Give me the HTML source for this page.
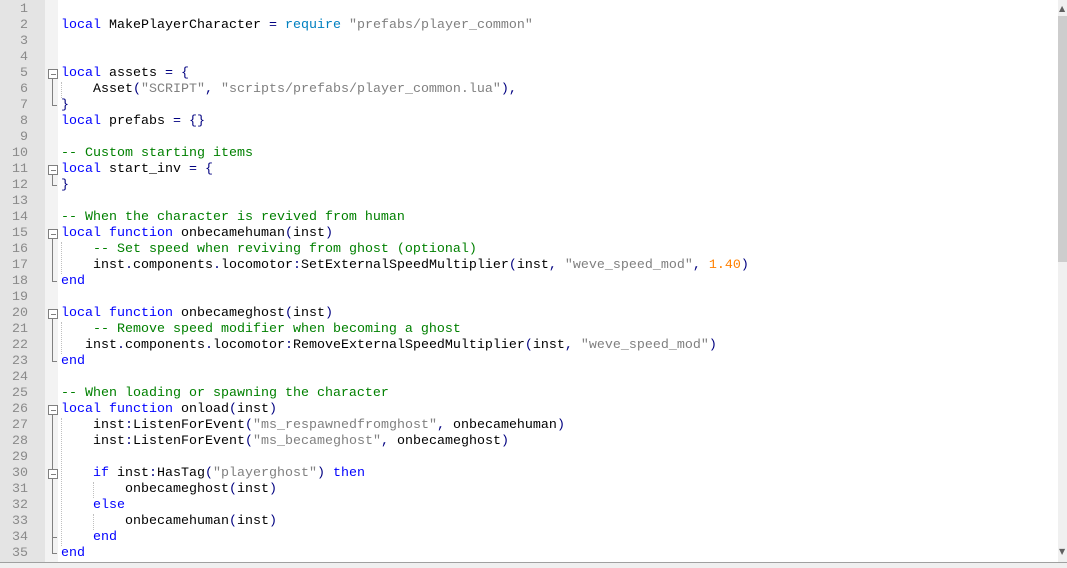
<!DOCTYPE html>
<html><head><meta charset="utf-8"><style>
html,body{margin:0;padding:0;width:1067px;height:567px;overflow:hidden;background:#fff;}
#gut{position:absolute;left:0;top:0;width:45px;height:562px;background:#e4e4e4;}
#fold{position:absolute;left:45px;top:0;width:13px;height:562px;background:#f3f3f3;}
#code{position:absolute;left:0;top:2px;width:1058px;}
.l{position:relative;height:16px;line-height:16px;font-family:"Liberation Mono",monospace;font-size:13.33px;white-space:pre;}
.n{position:absolute;left:0;width:28px;color:#8a8a8a;text-align:right;}
.t{position:absolute;left:61px;color:#000;}
.k{color:#0000ff}.s{color:#808080}.c{color:#008000}.r{color:#0080c0}.o{color:#000080}.num{color:#ff8000}
#sb{position:absolute;left:1058px;top:0;width:9px;height:562px;background:#f0f0f0;}
#th{position:absolute;left:1058px;top:16px;width:9px;height:246px;background:#cdcdcd;}
#bot{position:absolute;left:0;top:562px;width:1067px;height:5px;background:#f0f0f0;border-top:1px solid #a0a0a0;}
.box{position:absolute;left:48px;width:8px;height:8px;border:1px solid #808080;background:#fff;}
.box:after{content:"";position:absolute;left:2px;top:4px;width:5px;height:1px;background:#808080;}
.vl{position:absolute;left:52px;width:1px;background:#808080;}
.hl{position:absolute;left:52px;width:5px;height:1px;background:#808080;}
.ig{position:absolute;width:0;border-left:1px dotted #c0c0c0;}
</style></head><body>
<div id="gut"></div><div id="fold"></div>
<div id="code">
<div class="l"><span class="n">1</span></div>
<div class="l"><span class="n">2</span><span class="t"><span class="k">local</span> MakePlayerCharacter <span class="o">=</span> <span class="r">require</span> <span class="s">"prefabs/player_common"</span></span></div>
<div class="l"><span class="n">3</span></div>
<div class="l"><span class="n">4</span></div>
<div class="l"><span class="n">5</span><span class="t"><span class="k">local</span> assets <span class="o">=</span> <span class="o">{</span></span></div>
<div class="l"><span class="n">6</span><span class="t">    Asset<span class="o">(</span><span class="s">"SCRIPT"</span><span class="o">,</span> <span class="s">"scripts/prefabs/player_common.lua"</span><span class="o">),</span></span></div>
<div class="l"><span class="n">7</span><span class="t"><span class="o">}</span></span></div>
<div class="l"><span class="n">8</span><span class="t"><span class="k">local</span> prefabs <span class="o">=</span> <span class="o">{}</span></span></div>
<div class="l"><span class="n">9</span></div>
<div class="l"><span class="n">10</span><span class="t"><span class="c">-- Custom starting items</span></span></div>
<div class="l"><span class="n">11</span><span class="t"><span class="k">local</span> start_inv <span class="o">=</span> <span class="o">{</span></span></div>
<div class="l"><span class="n">12</span><span class="t"><span class="o">}</span></span></div>
<div class="l"><span class="n">13</span></div>
<div class="l"><span class="n">14</span><span class="t"><span class="c">-- When the character is revived from human</span></span></div>
<div class="l"><span class="n">15</span><span class="t"><span class="k">local</span> <span class="k">function</span> onbecamehuman<span class="o">(</span>inst<span class="o">)</span></span></div>
<div class="l"><span class="n">16</span><span class="t">    <span class="c">-- Set speed when reviving from ghost (optional)</span></span></div>
<div class="l"><span class="n">17</span><span class="t">    inst<span class="o">.</span>components<span class="o">.</span>locomotor<span class="o">:</span>SetExternalSpeedMultiplier<span class="o">(</span>inst<span class="o">,</span> <span class="s">"weve_speed_mod"</span><span class="o">,</span> <span class="num">1.40</span><span class="o">)</span></span></div>
<div class="l"><span class="n">18</span><span class="t"><span class="k">end</span></span></div>
<div class="l"><span class="n">19</span></div>
<div class="l"><span class="n">20</span><span class="t"><span class="k">local</span> <span class="k">function</span> onbecameghost<span class="o">(</span>inst<span class="o">)</span></span></div>
<div class="l"><span class="n">21</span><span class="t">    <span class="c">-- Remove speed modifier when becoming a ghost</span></span></div>
<div class="l"><span class="n">22</span><span class="t">   inst<span class="o">.</span>components<span class="o">.</span>locomotor<span class="o">:</span>RemoveExternalSpeedMultiplier<span class="o">(</span>inst<span class="o">,</span> <span class="s">"weve_speed_mod"</span><span class="o">)</span></span></div>
<div class="l"><span class="n">23</span><span class="t"><span class="k">end</span></span></div>
<div class="l"><span class="n">24</span></div>
<div class="l"><span class="n">25</span><span class="t"><span class="c">-- When loading or spawning the character</span></span></div>
<div class="l"><span class="n">26</span><span class="t"><span class="k">local</span> <span class="k">function</span> onload<span class="o">(</span>inst<span class="o">)</span></span></div>
<div class="l"><span class="n">27</span><span class="t">    inst<span class="o">:</span>ListenForEvent<span class="o">(</span><span class="s">"ms_respawnedfromghost"</span><span class="o">,</span> onbecamehuman<span class="o">)</span></span></div>
<div class="l"><span class="n">28</span><span class="t">    inst<span class="o">:</span>ListenForEvent<span class="o">(</span><span class="s">"ms_becameghost"</span><span class="o">,</span> onbecameghost<span class="o">)</span></span></div>
<div class="l"><span class="n">29</span></div>
<div class="l"><span class="n">30</span><span class="t">    <span class="k">if</span> inst<span class="o">:</span>HasTag<span class="o">(</span><span class="s">"playerghost"</span><span class="o">)</span> <span class="k">then</span></span></div>
<div class="l"><span class="n">31</span><span class="t">        onbecameghost<span class="o">(</span>inst<span class="o">)</span></span></div>
<div class="l"><span class="n">32</span><span class="t">    <span class="k">else</span></span></div>
<div class="l"><span class="n">33</span><span class="t">        onbecamehuman<span class="o">(</span>inst<span class="o">)</span></span></div>
<div class="l"><span class="n">34</span><span class="t">    <span class="k">end</span></span></div>
<div class="l"><span class="n">35</span><span class="t"><span class="k">end</span></span></div>
</div>
<div class="vl" style="top:79px;height:27px"></div><div class="hl" style="top:105px"></div><div class="box" style="top:69px"></div>
<div class="vl" style="top:175px;height:11px"></div><div class="hl" style="top:185px"></div><div class="box" style="top:165px"></div>
<div class="vl" style="top:239px;height:43px"></div><div class="hl" style="top:281px"></div><div class="box" style="top:229px"></div>
<div class="vl" style="top:319px;height:43px"></div><div class="hl" style="top:361px"></div><div class="box" style="top:309px"></div>
<div class="vl" style="top:415px;height:139px"></div><div class="hl" style="top:553px"></div><div class="box" style="top:405px"></div>
<div class="box" style="top:469px"></div><div class="hl" style="top:537px"></div>
<div class="ig" style="left:61px;top:82px;height:16px"></div>
<div class="ig" style="left:61px;top:242px;height:32px"></div>
<div class="ig" style="left:61px;top:322px;height:32px"></div>
<div class="ig" style="left:61px;top:418px;height:128px"></div>
<div class="ig" style="left:93px;top:482px;height:16px"></div>
<div class="ig" style="left:93px;top:514px;height:16px"></div>
<div id="sb"></div><div id="th"></div>
<div style="position:absolute;left:1059px;top:4px;font:8px 'DejaVu Sans';color:#606060">▲</div>
<div style="position:absolute;left:1059px;top:547px;font:8px 'DejaVu Sans';color:#606060">▼</div>
<div id="bot"></div>
</body></html>
